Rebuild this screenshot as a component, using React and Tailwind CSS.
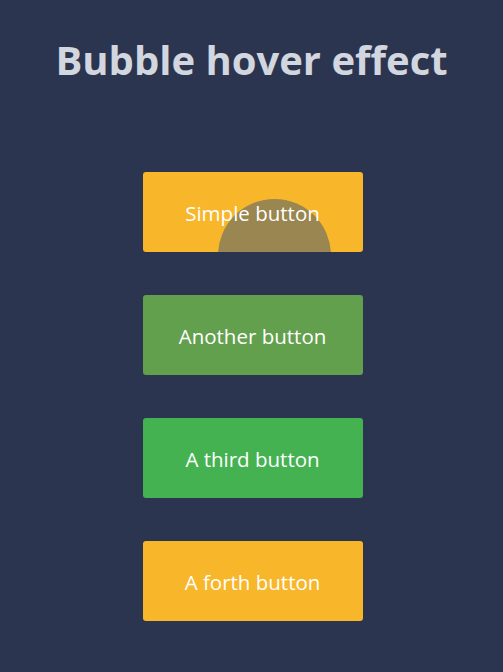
const buttons = [
  { label: 'Simple button', color: 'bg-[#f8b62b]', bubble: true },
  { label: 'Another button', color: 'bg-[#63a04e]' },
  { label: 'A third button', color: 'bg-[#45b252]' },
  { label: 'A forth button', color: 'bg-[#f8b62b]' },
];

const BubbleButton = ({ label, color, bubble }) => (
  <button
    className={`relative overflow-hidden w-[220px] h-[80px] rounded-[3px] pt-[3px] text-white text-[20.5px] ${color}`}
    style={{ fontFamily: '"Open Sans", "Noto Sans", sans-serif' }}
  >
    {bubble && (
      <span className="absolute left-[75px] top-[27px] w-[113px] h-[113px] rounded-full bg-[#9a8650]" />
    )}
    <span className="relative">{label}</span>
  </button>
);

export default function App() {
  return (
    <div className="min-h-[672px] bg-[#2b3550] flex flex-col items-center">
      <h1
        className="mt-[30px] text-[40px] font-bold text-[#d2d6de] leading-[60px]"
        style={{ fontFamily: '"Open Sans", "Noto Sans", sans-serif' }}
      >
        Bubble hover effect
      </h1>
      <div className="mt-[82px] flex flex-col gap-[43px] pl-[2px]">
        {buttons.map((b) => (
          <BubbleButton key={b.label} {...b} />
        ))}
      </div>
    </div>
  );
}
